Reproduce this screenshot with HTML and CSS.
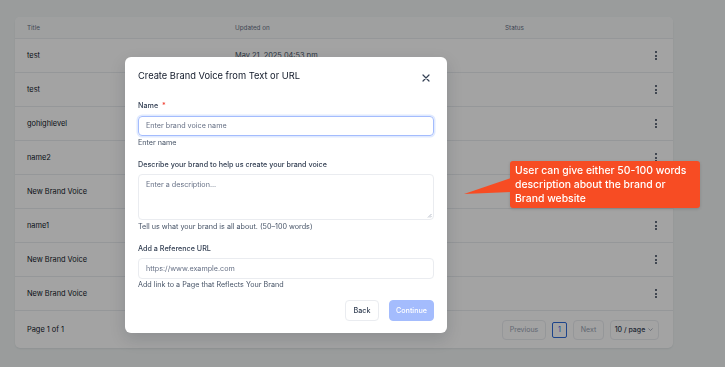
FILE: index.html
```html
<!DOCTYPE html>
<html lang="en">
<head>
    <meta charset="UTF-8">
    <meta name="viewport" content="width=device-width, initial-scale=1.0">
    <title>Brand Voices</title>
    <link rel="stylesheet" href="styles.css">
</head>
<body>
    <div class="page">
        <div class="card">
            <div class="row head">
                <div>Title</div>
                <div>Updated on</div>
                <div>Status</div>
                <div></div>
            </div>
            <div class="row">
                <div>test</div>
                <div class="muted">May 21, 2025 04:53 pm</div>
                <div></div>
                <div class="kebab"><span></span><span></span><span></span></div>
            </div>
            <div class="row">
                <div>test</div>
                <div></div>
                <div></div>
                <div class="kebab"><span></span><span></span><span></span></div>
            </div>
            <div class="row">
                <div>gohighlevel</div>
                <div></div>
                <div></div>
                <div class="kebab"><span></span><span></span><span></span></div>
            </div>
            <div class="row">
                <div>name2</div>
                <div></div>
                <div></div>
                <div class="kebab"><span></span><span></span><span></span></div>
            </div>
            <div class="row">
                <div>New Brand Voice</div>
                <div></div>
                <div></div>
                <div class="kebab"><span></span><span></span><span></span></div>
            </div>
            <div class="row">
                <div>name1</div>
                <div></div>
                <div></div>
                <div class="kebab"><span></span><span></span><span></span></div>
            </div>
            <div class="row">
                <div>New Brand Voice</div>
                <div></div>
                <div></div>
                <div class="kebab"><span></span><span></span><span></span></div>
            </div>
            <div class="row">
                <div>New Brand Voice</div>
                <div></div>
                <div></div>
                <div class="kebab"><span></span><span></span><span></span></div>
            </div>
            <div class="footer">
                <div>Page 1 of 1</div>
                <div class="pager">
                    <button class="pg prev disabled">Previous</button>
                    <button class="pg current">1</button>
                    <button class="pg next disabled">Next</button>
                    <button class="pg size">10 / page
                        <svg width="7" height="7" viewBox="0 0 10 10"><path d="M2 3.5l3 3 3-3" fill="none" stroke="#98a2b3" stroke-width="1.2"/></svg>
                    </button>
                </div>
            </div>
        </div>
    </div>

    <div class="overlay"></div>

    <div class="modal">
        <div class="modal-head">
            <h2>Create Brand Voice from Text or URL</h2>
            <svg class="close" width="8" height="8" viewBox="0 0 8 8"><path d="M1 1l6 6M7 1l-6 6" stroke="#344054" stroke-width="1.2" stroke-linecap="round"/></svg>
        </div>

        <div class="field first">
            <label>Name <span class="req">*</span></label>
            <div class="input focus">Enter brand voice name</div>
            <div class="help">Enter name</div>
        </div>

        <div class="field">
            <label>Describe your brand to help us create your brand voice</label>
            <div class="input area">Enter a description...
                <svg class="grip" width="5" height="5" viewBox="0 0 5 5"><path d="M4.5 1L1 4.5M4.5 3L3 4.5" stroke="#98a2b3" stroke-width="0.7"/></svg>
            </div>
            <div class="help">Tell us what your brand is all about. (50–100 words)</div>
        </div>

        <div class="field">
            <label>Add a Reference URL</label>
            <div class="input url">https://www.example.com</div>
            <div class="help tight">Add link to a Page that Reflects Your Brand</div>
        </div>

        <div class="actions">
            <button class="btn back">Back</button>
            <button class="btn primary">Continue</button>
        </div>
    </div>

    <div class="callout">
        <svg class="tip" width="47" height="18" viewBox="0 0 47 18"><polygon points="0,16 47,0 47,14" fill="#f74c23"/></svg>
        User can give either 50-100 words description about the brand or Brand website
    </div>
</body>
</html>
```

FILE: styles.css
```css
body {
    margin: 0;
    font-family: Inter, "Noto Sans", sans-serif;
    background: #f1f5f5;
    color: #101828;
    width: 725px;
    height: 367px;
    overflow: hidden;
}
.page {
    padding: 17px 52px 0 15px;
}
.card {
    background: #fff;
    border-radius: 5px;
    box-shadow: 0 1px 2px rgba(16, 24, 40, 0.08);
    overflow: hidden;
}
.row {
    display: grid;
    grid-template-columns: 208px 270px 1fr 34px;
    align-items: center;
    height: 34px;
    padding-left: 12px;
    font-size: 7.4px;
    border-bottom: 1px solid #eaecf0;
    box-sizing: border-box;
}
.row.head {
    height: 22px;
    background: #f9fafb;
    color: #667085;
    font-size: 6.3px;
}
.row .muted {
    color: #475467;
}
.kebab {
    display: flex;
    flex-direction: column;
    align-items: center;
    gap: 1.5px;
}
.kebab span {
    width: 2px;
    height: 2px;
    border-radius: 50%;
    background: #344054;
}
.footer {
    display: flex;
    align-items: center;
    justify-content: space-between;
    height: 37px;
    padding: 0 14px 0 12px;
    font-size: 7.4px;
}
.pager {
    display: flex;
    align-items: center;
    gap: 6px;
}
.pg {
    font-family: inherit;
    font-size: 7px;
    height: 20px;
    padding: 0;
    background: #fff;
    border: 1px solid #eaecf0;
    border-radius: 4px;
    color: #344054;
}
.pg.prev {
    width: 44px;
}
.pg.next {
    width: 31px;
}
.pg.disabled {
    color: #98a2b3;
}
.pg.current {
    height: 16px;
    width: 15px;
    border: 1px solid #2e6bd9;
    border-radius: 2px;
    color: #155eef;
}
.pg.size {
    display: flex;
    align-items: center;
    justify-content: center;
    gap: 2px;
    width: 49px;
    font-weight: 500;
}
.overlay {
    position: fixed;
    inset: 0;
    background: rgba(0, 0, 0, 0.36);
}
.modal {
    position: absolute;
    left: 125px;
    top: 57px;
    width: 322px;
    box-sizing: border-box;
    padding: 13px 13px 12px;
    background: #fff;
    border-radius: 6px;
    box-shadow: 0 6px 16px rgba(16, 24, 40, 0.15);
}
.modal-head {
    display: flex;
    justify-content: space-between;
    align-items: center;
    height: 11px;
}
.modal-head h2 {
    margin: 0;
    font-size: 9.3px;
    font-weight: 400;
    color: #101828;
    line-height: 11px;
}
.close {
    margin: 4px 4px 0 0;
}
.field {
    margin-top: 12px;
}
.field.first {
    margin-top: 20px;
}
label {
    display: block;
    font-size: 7.2px;
    line-height: 10px;
    font-weight: 500;
    color: #344054;
    margin-bottom: 4px;
}
.field.first label {
    margin-bottom: 5px;
}
.req {
    color: #f04438;
    margin-left: 2px;
}
.input {
    position: relative;
    box-sizing: border-box;
    height: 21px;
    padding: 0 7px;
    border: 1px solid #eaecf0;
    border-radius: 4px;
    font-size: 7.2px;
    line-height: 19px;
    color: #667085;
}
.input.focus {
    height: 20px;
    line-height: 18px;
    border-color: #a4bcfd;
    box-shadow: 0 0 0 1.5px #e0eaff;
}
.input.area {
    height: 46px;
    line-height: 20px;
}
.grip {
    position: absolute;
    right: 1px;
    bottom: 1px;
}
.help {
    font-size: 7.2px;
    line-height: 10px;
    color: #475467;
    margin-top: 2px;
}
.help.tight {
    margin-top: 1px;
}
.actions {
    display: flex;
    justify-content: flex-end;
    gap: 10px;
    margin-top: 10px;
}
.btn {
    font-family: inherit;
    font-size: 7.2px;
    font-weight: 500;
    height: 21px;
    border-radius: 4px;
    padding: 0;
}
.back {
    width: 34px;
    background: #fff;
    border: 1px solid #eaecf0;
    color: #344054;
}
.primary {
    width: 45px;
    background: #a4bcfd;
    border: 1px solid #a4bcfd;
    color: #fff;
}
.callout {
    position: absolute;
    left: 510px;
    top: 161px;
    width: 190px;
    height: 47px;
    box-sizing: border-box;
    padding: 3px 5px;
    background: #f74c23;
    border-radius: 3px;
    box-shadow: 0 1px 3px rgba(0, 0, 0, 0.15);
    color: #fff;
    font-size: 10.4px;
    font-weight: 500;
    line-height: 14px;
}
.tip {
    position: absolute;
    left: -46px;
    top: 17px;
}
```
